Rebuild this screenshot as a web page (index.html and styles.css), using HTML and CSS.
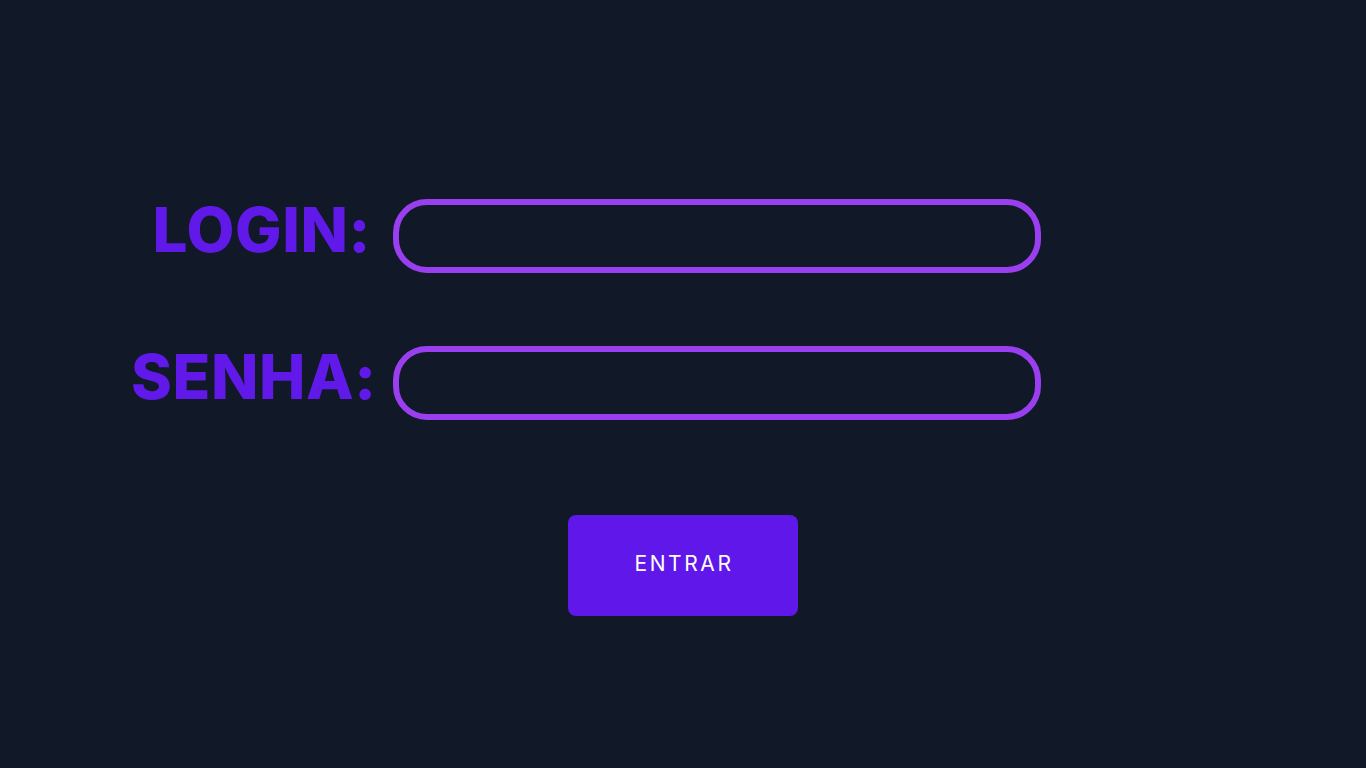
FILE: index.html
```html
<!DOCTYPE html>
<html lang="pt-BR">
<head>
<meta charset="utf-8">
<title>Login</title>
<link rel="stylesheet" href="styles.css">
</head>
<body>
<main class="page">
  <form class="login-form">
    <div class="fields">
      <label class="field-label" for="login">LOGIN:</label>
      <input class="field-input" id="login" type="text">
      <label class="field-label" for="senha">SENHA:</label>
      <input class="field-input" id="senha" type="password">
    </div>
    <div class="actions">
      <button class="btn-enter" type="button">ENTRAR</button>
    </div>
  </form>
</main>
</body>
</html>
```
FILE: styles.css
```css
html, body {
  margin: 0;
  padding: 0;
  height: 100%;
}
body {
  background: #111827;
  font-family: "Inter", "Noto Sans", sans-serif;
}
.page {
  padding-top: 199px;
}
.login-form {
  display: flex;
  flex-direction: column;
}
.fields {
  display: grid;
  grid-template-columns: 240px 648px;
  column-gap: 22px;
  row-gap: 73px;
  padding-left: 131px;
  align-items: center;
}
.field-label {
  color: #6119ea;
  font-size: 62px;
  font-weight: 800;
  letter-spacing: 0.6px;
  text-align: right;
  line-height: 1;
  padding-bottom: 12px;
}
.field-input {
  box-sizing: border-box;
  height: 74px;
  width: 648px;
  border: 6px solid #9a3ff0;
  border-radius: 34px;
  background: transparent;
  outline: none;
}
.actions {
  display: flex;
  justify-content: center;
  margin-top: 95px;
}
.btn-enter {
  width: 230px;
  height: 101px;
  border: none;
  border-radius: 8px;
  background: #5f17ea;
  color: #ffffff;
  font-family: "Inter", "Noto Sans", sans-serif;
  font-size: 21px;
  font-weight: 400;
  letter-spacing: 2.6px;
  padding: 0 0 0 2px;
  line-height: 1;
  padding-bottom: 4px;
}
```
